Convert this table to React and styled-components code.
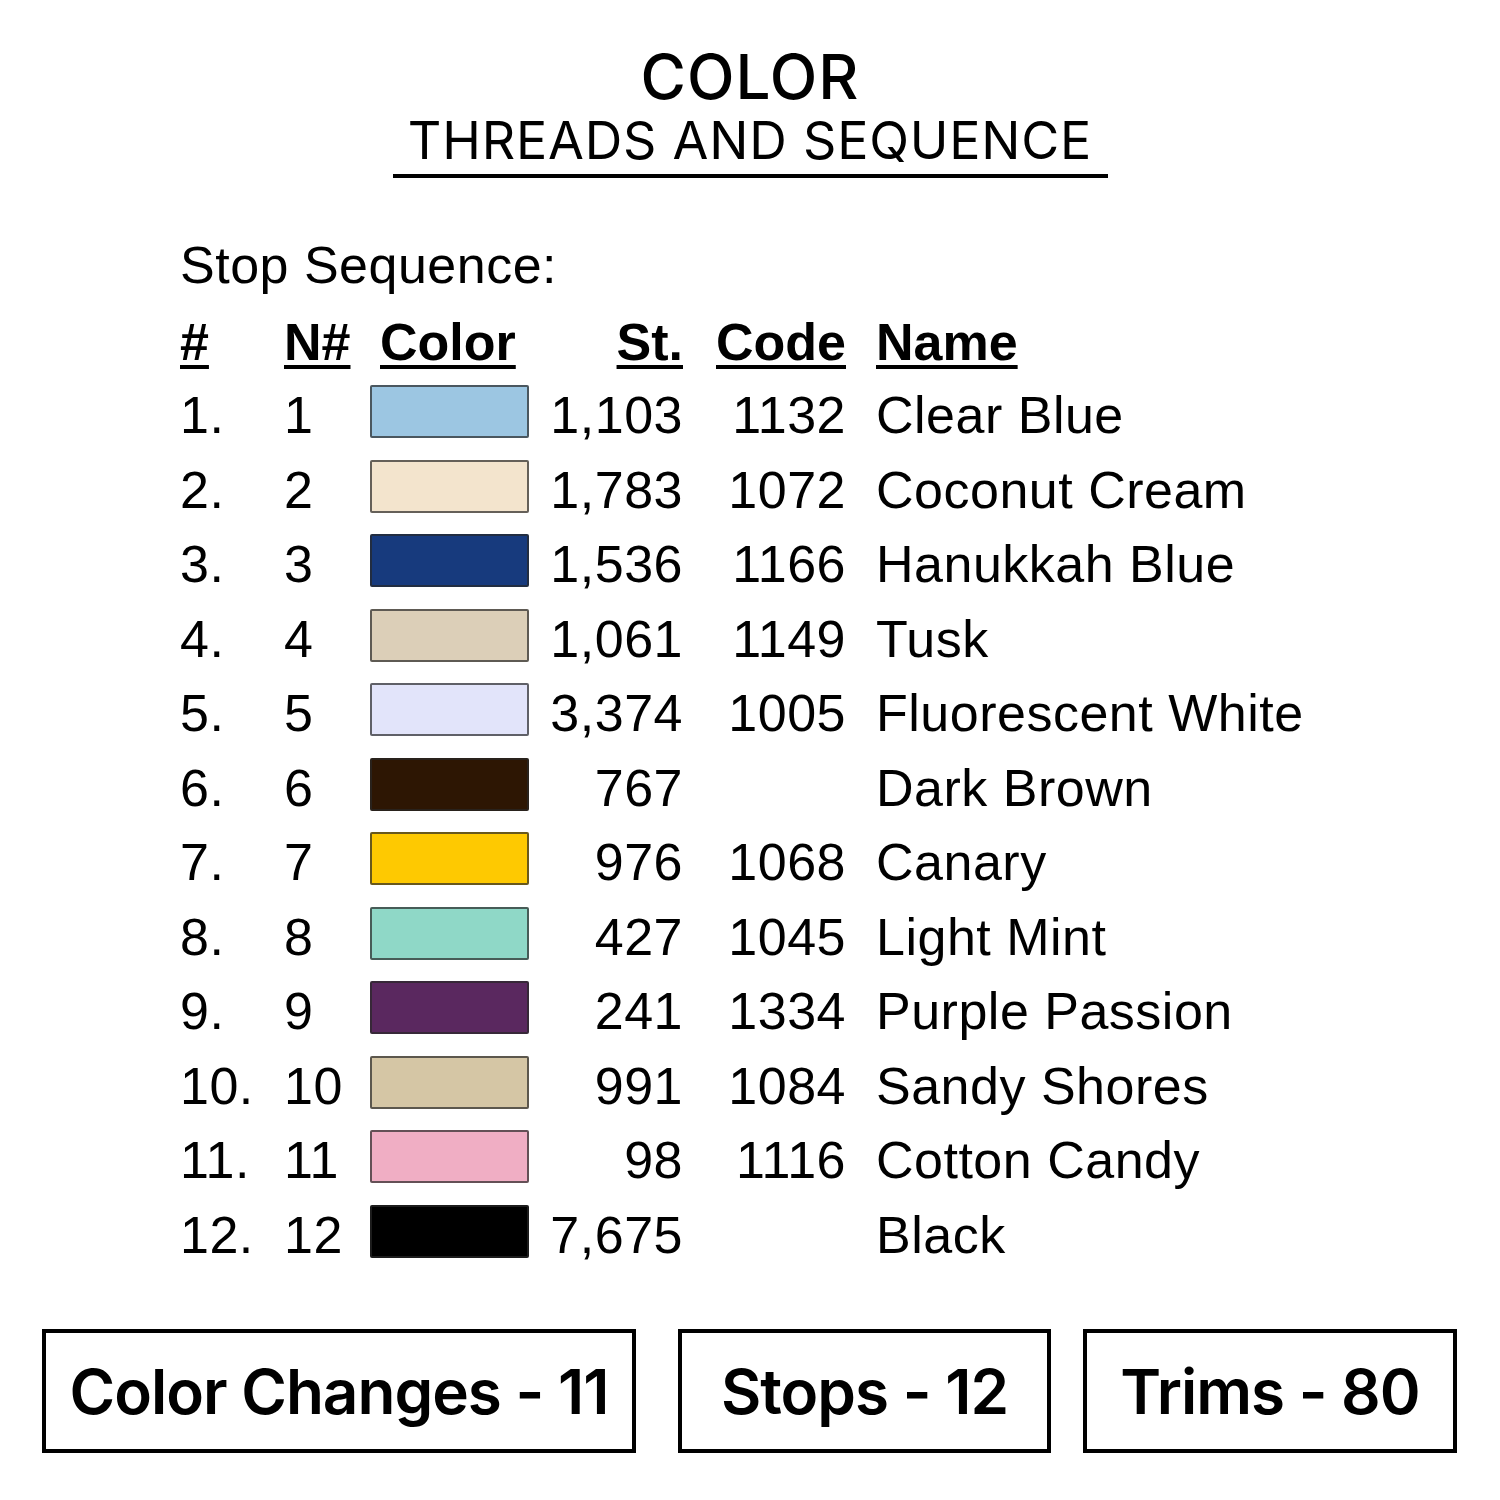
import React from "react";
import styled, { createGlobalStyle } from "styled-components";

const Global = createGlobalStyle`
  html, body { margin: 0; padding: 0; background: #fff; }
  body { font-family: "Liberation Sans", Arial, sans-serif; color: #000; }
`;

const Page = styled.div`
  width: 1500px;
  height: 1500px;
  box-sizing: border-box;
  padding-top: 40px;
  display: flex;
  flex-direction: column;
  align-items: center;
`;

const Heading = styled.header`
  display: flex;
  flex-direction: column;
  align-items: center;
  font-family: Inter, "Open Sans", sans-serif;
`;

const Title = styled.h1`
  margin: 0;
  font-size: 62px;
  font-weight: 500;
  line-height: 74px;
  letter-spacing: 1px;
`;

const Subtitle = styled.h2`
  margin: 0;
  font-size: 52px;
  font-weight: 400;
  line-height: 50px;
  letter-spacing: 0.8px;
  width: 715px;
  text-align: center;
  padding-top: 2px;
  padding-bottom: 8px;
  border-bottom: 4px solid #000;
`;

const Sequence = styled.section`
  align-self: flex-start;
  margin-left: 180px;
  margin-top: 50px;
  font-family: "Liberation Sans", Arial, sans-serif;
  font-size: 52px;
  letter-spacing: 0.5px;
`;

const Caption = styled.div`
  line-height: 74px;
  margin-bottom: 4px;
`;

const Table = styled.div`
  display: grid;
  grid-template-columns: 104px 86px 159px 154px 163px auto;
  grid-template-rows: 72px;
  grid-auto-rows: 74.5px;
  line-height: 74.5px;
`;

const Head = styled.div`
  font-weight: 700;
  line-height: 72px;
  letter-spacing: 0;
  text-align: ${(p) => (p.$right ? "right" : "left")};
  padding-left: ${(p) => p.$pl || 0}px;
  & > span {
    text-decoration: underline;
    text-decoration-thickness: 4px;
    text-underline-offset: 5px;
  }
`;

const Cell = styled.div`
  white-space: nowrap;
  text-align: ${(p) => (p.$right ? "right" : "left")};
  padding-left: ${(p) => p.$pl || 0}px;
`;

const Swatch = styled.div`
  align-self: start;
  margin-top: 7px;
  height: 53px;
  box-sizing: border-box;
  border: 2px solid ${(p) => p.$edge};
  border-radius: 2px;
  background: ${(p) => p.$color};
`;

const Stats = styled.footer`
  align-self: stretch;
  margin-top: 57px;
  padding-left: 42px;
  display: flex;
  font-family: Inter, "Open Sans", sans-serif;
`;

const StatBox = styled.div`
  width: ${(p) => p.$w}px;
  height: 124px;
  box-sizing: border-box;
  margin-right: ${(p) => p.$gap || 0}px;
  border: 4px solid #000;
  display: flex;
  align-items: center;
  justify-content: center;
  font-size: 62px;
  font-weight: 600;
  letter-spacing: -1px;
`;

const rows = [
  ["1.", "1", "#9cc6e2", "1,103", "1132", "Clear Blue"],
  ["2.", "2", "#f3e4cd", "1,783", "1072", "Coconut Cream"],
  ["3.", "3", "#173a7d", "1,536", "1166", "Hanukkah Blue"],
  ["4.", "4", "#dccfb8", "1,061", "1149", "Tusk"],
  ["5.", "5", "#e2e4fa", "3,374", "1005", "Fluorescent White"],
  ["6.", "6", "#2d1603", "767", "", "Dark Brown"],
  ["7.", "7", "#fec901", "976", "1068", "Canary"],
  ["8.", "8", "#8fd8c7", "427", "1045", "Light Mint"],
  ["9.", "9", "#5a285f", "241", "1334", "Purple Passion"],
  ["10.", "10", "#d5c6a5", "991", "1084", "Sandy Shores"],
  ["11.", "11", "#f0aec4", "98", "1116", "Cotton Candy"],
  ["12.", "12", "#000000", "7,675", "", "Black"],
];

export default function App() {
  return (
    <>
      <Global />
      <Page>
        <Heading>
          <Title>COLOR</Title>
          <Subtitle>THREADS AND SEQUENCE</Subtitle>
        </Heading>
        <Sequence>
          <Caption>Stop Sequence:</Caption>
          <Table>
            <Head><span>#</span></Head>
            <Head><span>N#</span></Head>
            <Head $pl={10}><span>Color</span></Head>
            <Head $right><span>St.</span></Head>
            <Head $right><span>Code</span></Head>
            <Head $pl={30}><span>Name</span></Head>
            {rows.map(([n, nn, color, st, code, name]) => (
              <React.Fragment key={n}>
                <Cell>{n}</Cell>
                <Cell>{nn}</Cell>
                <Swatch $color={color} $edge="rgba(40,40,40,0.7)" />
                <Cell $right>{st}</Cell>
                <Cell $right>{code}</Cell>
                <Cell $pl={30}>{name}</Cell>
              </React.Fragment>
            ))}
          </Table>
        </Sequence>
        <Stats>
          <StatBox $w={594} $gap={42}>Color Changes - 11</StatBox>
          <StatBox $w={373} $gap={32}>Stops - 12</StatBox>
          <StatBox $w={374}>Trims - 80</StatBox>
        </Stats>
      </Page>
    </>
  );
}
